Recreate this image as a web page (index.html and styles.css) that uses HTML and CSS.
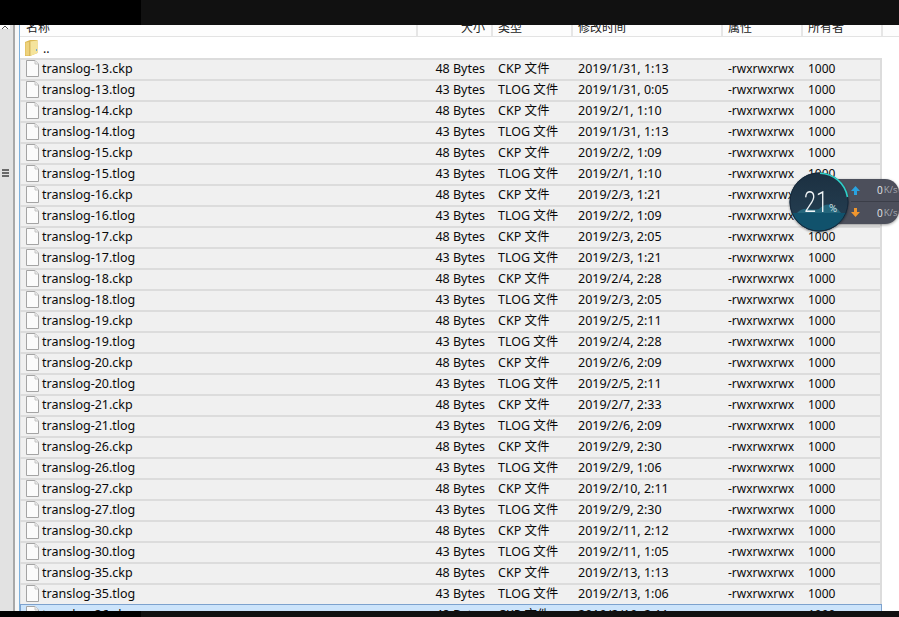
FILE: index.html
```html
<!DOCTYPE html>
<html lang="zh">
<head>
<meta charset="utf-8">
<title>translog</title>
<link rel="stylesheet" href="styles.css">
</head>
<body>
<svg class="defs" width="0" height="0" aria-hidden="true"><defs>
<symbol id="doc" viewBox="0 0 13 17"><path d="M.5.5H9L12.500 4V16.500H.5Z" fill="#fbfbfb" stroke="#a4a4a4"/><path d="M9 .5V4H12.500" fill="#ececec" stroke="#c4c4c4"/></symbol>
</defs></svg>
<div class="app">
  <div class="topbar"><div class="topbar-left"></div></div>
  <div class="main">
    <div class="rail">
      <div class="scroll-up"><svg viewBox="0 0 10 4" width="10" height="4"><path d="M2 4 5 1 8 4" fill="none" stroke="#555"/></svg></div>
      <div class="grip"><i></i><i></i><i></i></div>
    </div>
    <div class="gutter"></div>
    <div class="pane">
      <div class="thead">
        <div class="th c-name">名称</div>
        <div class="th c-size">大小</div>
        <div class="th c-type">类型</div>
        <div class="th c-date">修改时间</div>
        <div class="th c-attr">属性</div>
        <div class="th c-own">所有者</div>
      </div>
      <div class="parent">
        <svg class="folder" viewBox="0 0 13 16" width="13" height="16"><path d="M0 2 5 0H12.500V13L5 16H0Z" fill="#dcb955"/><path d="M.5 2.500V15.500H4.500V2Z" fill="#eed27c"/><path d="M5 1.500 12.500.5V13L5 16Z" fill="#f5e49c"/><path d="M5 1.500V16" stroke="#c9a84e" stroke-width=".7"/><path d="M11 9h1v2h-1z" fill="#6fa8d6"/></svg>
        <span>..</span>
      </div>
      <div class="rows">
<div class="row"><div class="td c-name"><svg class="doc" width="13" height="17"><use href="#doc"/></svg>translog-13.ckp</div><div class="td c-size">48 Bytes</div><div class="td c-type">CKP 文件</div><div class="td c-date">2019/1/31, 1:13</div><div class="td c-attr">-rwxrwxrwx</div><div class="td c-own">1000</div></div>
<div class="row"><div class="td c-name"><svg class="doc" width="13" height="17"><use href="#doc"/></svg>translog-13.tlog</div><div class="td c-size">43 Bytes</div><div class="td c-type">TLOG 文件</div><div class="td c-date">2019/1/31, 0:05</div><div class="td c-attr">-rwxrwxrwx</div><div class="td c-own">1000</div></div>
<div class="row"><div class="td c-name"><svg class="doc" width="13" height="17"><use href="#doc"/></svg>translog-14.ckp</div><div class="td c-size">48 Bytes</div><div class="td c-type">CKP 文件</div><div class="td c-date">2019/2/1, 1:10</div><div class="td c-attr">-rwxrwxrwx</div><div class="td c-own">1000</div></div>
<div class="row"><div class="td c-name"><svg class="doc" width="13" height="17"><use href="#doc"/></svg>translog-14.tlog</div><div class="td c-size">43 Bytes</div><div class="td c-type">TLOG 文件</div><div class="td c-date">2019/1/31, 1:13</div><div class="td c-attr">-rwxrwxrwx</div><div class="td c-own">1000</div></div>
<div class="row"><div class="td c-name"><svg class="doc" width="13" height="17"><use href="#doc"/></svg>translog-15.ckp</div><div class="td c-size">48 Bytes</div><div class="td c-type">CKP 文件</div><div class="td c-date">2019/2/2, 1:09</div><div class="td c-attr">-rwxrwxrwx</div><div class="td c-own">1000</div></div>
<div class="row"><div class="td c-name"><svg class="doc" width="13" height="17"><use href="#doc"/></svg>translog-15.tlog</div><div class="td c-size">43 Bytes</div><div class="td c-type">TLOG 文件</div><div class="td c-date">2019/2/1, 1:10</div><div class="td c-attr">-rwxrwxrwx</div><div class="td c-own">1000</div></div>
<div class="row"><div class="td c-name"><svg class="doc" width="13" height="17"><use href="#doc"/></svg>translog-16.ckp</div><div class="td c-size">48 Bytes</div><div class="td c-type">CKP 文件</div><div class="td c-date">2019/2/3, 1:21</div><div class="td c-attr">-rwxrwxrwx</div><div class="td c-own">1000</div></div>
<div class="row"><div class="td c-name"><svg class="doc" width="13" height="17"><use href="#doc"/></svg>translog-16.tlog</div><div class="td c-size">43 Bytes</div><div class="td c-type">TLOG 文件</div><div class="td c-date">2019/2/2, 1:09</div><div class="td c-attr">-rwxrwxrwx</div><div class="td c-own">1000</div></div>
<div class="row"><div class="td c-name"><svg class="doc" width="13" height="17"><use href="#doc"/></svg>translog-17.ckp</div><div class="td c-size">48 Bytes</div><div class="td c-type">CKP 文件</div><div class="td c-date">2019/2/3, 2:05</div><div class="td c-attr">-rwxrwxrwx</div><div class="td c-own">1000</div></div>
<div class="row"><div class="td c-name"><svg class="doc" width="13" height="17"><use href="#doc"/></svg>translog-17.tlog</div><div class="td c-size">43 Bytes</div><div class="td c-type">TLOG 文件</div><div class="td c-date">2019/2/3, 1:21</div><div class="td c-attr">-rwxrwxrwx</div><div class="td c-own">1000</div></div>
<div class="row"><div class="td c-name"><svg class="doc" width="13" height="17"><use href="#doc"/></svg>translog-18.ckp</div><div class="td c-size">48 Bytes</div><div class="td c-type">CKP 文件</div><div class="td c-date">2019/2/4, 2:28</div><div class="td c-attr">-rwxrwxrwx</div><div class="td c-own">1000</div></div>
<div class="row"><div class="td c-name"><svg class="doc" width="13" height="17"><use href="#doc"/></svg>translog-18.tlog</div><div class="td c-size">43 Bytes</div><div class="td c-type">TLOG 文件</div><div class="td c-date">2019/2/3, 2:05</div><div class="td c-attr">-rwxrwxrwx</div><div class="td c-own">1000</div></div>
<div class="row"><div class="td c-name"><svg class="doc" width="13" height="17"><use href="#doc"/></svg>translog-19.ckp</div><div class="td c-size">48 Bytes</div><div class="td c-type">CKP 文件</div><div class="td c-date">2019/2/5, 2:11</div><div class="td c-attr">-rwxrwxrwx</div><div class="td c-own">1000</div></div>
<div class="row"><div class="td c-name"><svg class="doc" width="13" height="17"><use href="#doc"/></svg>translog-19.tlog</div><div class="td c-size">43 Bytes</div><div class="td c-type">TLOG 文件</div><div class="td c-date">2019/2/4, 2:28</div><div class="td c-attr">-rwxrwxrwx</div><div class="td c-own">1000</div></div>
<div class="row"><div class="td c-name"><svg class="doc" width="13" height="17"><use href="#doc"/></svg>translog-20.ckp</div><div class="td c-size">48 Bytes</div><div class="td c-type">CKP 文件</div><div class="td c-date">2019/2/6, 2:09</div><div class="td c-attr">-rwxrwxrwx</div><div class="td c-own">1000</div></div>
<div class="row"><div class="td c-name"><svg class="doc" width="13" height="17"><use href="#doc"/></svg>translog-20.tlog</div><div class="td c-size">43 Bytes</div><div class="td c-type">TLOG 文件</div><div class="td c-date">2019/2/5, 2:11</div><div class="td c-attr">-rwxrwxrwx</div><div class="td c-own">1000</div></div>
<div class="row"><div class="td c-name"><svg class="doc" width="13" height="17"><use href="#doc"/></svg>translog-21.ckp</div><div class="td c-size">48 Bytes</div><div class="td c-type">CKP 文件</div><div class="td c-date">2019/2/7, 2:33</div><div class="td c-attr">-rwxrwxrwx</div><div class="td c-own">1000</div></div>
<div class="row"><div class="td c-name"><svg class="doc" width="13" height="17"><use href="#doc"/></svg>translog-21.tlog</div><div class="td c-size">43 Bytes</div><div class="td c-type">TLOG 文件</div><div class="td c-date">2019/2/6, 2:09</div><div class="td c-attr">-rwxrwxrwx</div><div class="td c-own">1000</div></div>
<div class="row"><div class="td c-name"><svg class="doc" width="13" height="17"><use href="#doc"/></svg>translog-26.ckp</div><div class="td c-size">48 Bytes</div><div class="td c-type">CKP 文件</div><div class="td c-date">2019/2/9, 2:30</div><div class="td c-attr">-rwxrwxrwx</div><div class="td c-own">1000</div></div>
<div class="row"><div class="td c-name"><svg class="doc" width="13" height="17"><use href="#doc"/></svg>translog-26.tlog</div><div class="td c-size">43 Bytes</div><div class="td c-type">TLOG 文件</div><div class="td c-date">2019/2/9, 1:06</div><div class="td c-attr">-rwxrwxrwx</div><div class="td c-own">1000</div></div>
<div class="row"><div class="td c-name"><svg class="doc" width="13" height="17"><use href="#doc"/></svg>translog-27.ckp</div><div class="td c-size">48 Bytes</div><div class="td c-type">CKP 文件</div><div class="td c-date">2019/2/10, 2:11</div><div class="td c-attr">-rwxrwxrwx</div><div class="td c-own">1000</div></div>
<div class="row"><div class="td c-name"><svg class="doc" width="13" height="17"><use href="#doc"/></svg>translog-27.tlog</div><div class="td c-size">43 Bytes</div><div class="td c-type">TLOG 文件</div><div class="td c-date">2019/2/9, 2:30</div><div class="td c-attr">-rwxrwxrwx</div><div class="td c-own">1000</div></div>
<div class="row"><div class="td c-name"><svg class="doc" width="13" height="17"><use href="#doc"/></svg>translog-30.ckp</div><div class="td c-size">48 Bytes</div><div class="td c-type">CKP 文件</div><div class="td c-date">2019/2/11, 2:12</div><div class="td c-attr">-rwxrwxrwx</div><div class="td c-own">1000</div></div>
<div class="row"><div class="td c-name"><svg class="doc" width="13" height="17"><use href="#doc"/></svg>translog-30.tlog</div><div class="td c-size">43 Bytes</div><div class="td c-type">TLOG 文件</div><div class="td c-date">2019/2/11, 1:05</div><div class="td c-attr">-rwxrwxrwx</div><div class="td c-own">1000</div></div>
<div class="row"><div class="td c-name"><svg class="doc" width="13" height="17"><use href="#doc"/></svg>translog-35.ckp</div><div class="td c-size">48 Bytes</div><div class="td c-type">CKP 文件</div><div class="td c-date">2019/2/13, 1:13</div><div class="td c-attr">-rwxrwxrwx</div><div class="td c-own">1000</div></div>
<div class="row"><div class="td c-name"><svg class="doc" width="13" height="17"><use href="#doc"/></svg>translog-35.tlog</div><div class="td c-size">43 Bytes</div><div class="td c-type">TLOG 文件</div><div class="td c-date">2019/2/13, 1:06</div><div class="td c-attr">-rwxrwxrwx</div><div class="td c-own">1000</div></div>
<div class="row selected"><div class="td c-name"><svg class="doc" width="13" height="17"><use href="#doc"/></svg>translog-36.ckp</div><div class="td c-size">48 Bytes</div><div class="td c-type">CKP 文件</div><div class="td c-date">2019/2/19, 2:11</div><div class="td c-attr">-rwxrwxrwx</div><div class="td c-own">1000</div></div>
      </div>
    </div>
  </div>
  <div class="bottombar"><div class="bottombar-left"></div></div>
</div>
<div class="meter">
  <div class="speeds">
    <div class="speed"><svg viewBox="0 0 9 9" width="9" height="9"><path d="M4.500 0 9 5H6V9H3V5H0Z" fill="#29a3e0"/></svg><b>0</b><em>K/s</em></div>
    <div class="speed"><svg viewBox="0 0 9 9" width="9" height="9"><path d="M4.500 9 9 4H6V0H3V4H0Z" fill="#f0962e"/></svg><b>0</b><em>K/s</em></div>
  </div>
  <div class="dial">
    <svg class="dial-art" viewBox="0 0 60 60" width="60" height="60">
      <defs>
        <clipPath id="disc"><circle cx="30" cy="30" r="29.500"/></clipPath>
        <linearGradient id="sky" x1="0" y1="0" x2="0" y2="1"><stop offset="0" stop-color="#1c3041"/><stop offset=".7" stop-color="#233c4f"/></linearGradient>
      </defs>
      <circle cx="30" cy="30" r="29.500" fill="url(#sky)"/>
      <g clip-path="url(#disc)">
        <path d="M8 41Q13 36 19 37T30 37Q36 31 42 33T52 41Z" fill="#24667c"/>
        <rect x="0" y="41" width="60" height="19" fill="#11526c"/>
      </g>
      <circle cx="30" cy="30" r="29" fill="none" stroke="#16283a" stroke-width="1"/>
      <path d="M31 1.200A28.800 28.800 0 0 1 58.500 25" fill="none" stroke="#2fd0c8" stroke-width="1.600"/>
    </svg>
    <span class="pct"><span class="digits">21</span><small>%</small></span>
  </div>
</div>
</body>
</html>
```
FILE: styles.css
```css
* { box-sizing: border-box; }
html, body { margin: 0; height: 100%; overflow: hidden; background: #fff; }
body { font: 12px/16px "Noto Sans CJK SC", "Liberation Sans", sans-serif; color: #111; }
.defs { position: absolute; }
.app { display: flex; flex-direction: column; height: 617px; }
.topbar { flex: 0 0 25px; background: #111; position: relative; z-index: 2; }
.topbar-left { width: 141px; height: 100%; background: #000; }
.bottombar { flex: 0 0 6px; background: #111; position: relative; z-index: 2; }
.bottombar-left { width: 141px; height: 100%; background: #000; }
.main { flex: 1; display: flex; min-height: 0; }
.rail { width: 13px; flex: none; background: #e2e2e2; }
.scroll-up { width: 10px; height: 4px; background: #fff; display: flex; }
.grip { width: 13px; display: flex; flex-direction: column; gap: 1px; padding: 0 4px 0 2px; margin-top: 140px; }
.grip i { display: block; height: 2px; background: #6a6a6a; }
.gutter { width: 7px; flex: none; background: #f7f7f7; border-left: 2px solid #a8a8a8; border-right: 1px solid #7fb1dc; }
.pane { flex: 1; min-width: 0; overflow: hidden; background: #fff; }
.thead { display: flex; height: 12px; background: #fdfdfd; border-bottom: 1px solid #e3e3e3; overflow: hidden; }
.th { flex: none; height: 11px; border-right: 2px solid #e6e6e6; line-height: 4px; overflow: hidden; white-space: nowrap; color: #222; }
.parent { height: 21px; display: flex; align-items: center; gap: 5px; padding-left: 5px; }
.parent span { line-height: 16px; }
.row { display: flex; align-items: center; width: 862px; height: 21px; background: #f0f0f0; box-shadow: inset 0 2px 0 #dcdcdc, inset -2px 0 0 #dcdcdc, inset 1px 0 0 #e2e2e2; }
.row.selected { background: #cce4fb; box-shadow: inset 0 1px 0 #7da2ce, inset -1px 0 0 #7da2ce, inset 1px 0 0 #7da2ce; }
.td { flex: none; white-space: nowrap; font-family: "Noto Sans", "Noto Sans CJK SC", sans-serif; font-size: 12.500px; color: #0a0a0a; }
.c-name { width: 398px; }
.c-size { width: 75px; text-align: right; }
.c-type { width: 80px; padding-left: 5px; }
.c-date { width: 150px; padding-left: 5px; }
.c-attr { width: 80px; padding-left: 5px; }
.c-own { width: 80px; padding-left: 5px; }
.td.c-name { display: flex; align-items: center; gap: 3px; padding-left: 6px; }
.td.c-size { padding-right: 8px; }
.td.c-attr, .td.c-own { font-size: 12px; }
.th.c-name { padding-left: 6px; }
.th.c-size { padding-right: 6px; }
.doc { flex: none; }
.folder { flex: none; }
.meter { position: absolute; left: 789px; top: 172px; width: 110px; height: 60px; }
.dial { position: absolute; left: 0; top: 0; width: 60px; height: 60px; }
.dial-art { position: absolute; left: 0; top: 0; filter: drop-shadow(0 1px 1px rgba(0,0,0,.4)); }
.pct { position: absolute; left: 15px; top: 13px; display: flex; align-items: baseline; color: #f2f6f8; white-space: nowrap; font-family: "Roboto", sans-serif; font-weight: 300; }
.digits { font-size: 30px; line-height: 34px; display: inline-block; width: 24px; transform: scaleX(.72); transform-origin: left center; }
.pct small { font-size: 11px; margin-left: 1px; }
.speeds { position: absolute; left: 43px; top: 7px; width: 67px; height: 45px; background: #4c4f5b; border-radius: 0 14px 14px 0; box-shadow: 0 1px 3px rgba(0,0,0,.4); display: flex; flex-direction: column; padding-left: 19px; }
.speed { display: flex; align-items: center; height: 22px; font: 9.500px/16px "Open Sans", sans-serif; color: #c9ccd2; }
.speed + .speed { border-top: 1px solid #3b3e48; }
.speed svg { flex: none; margin-right: 17px; }
.speed b { font-weight: 400; margin-right: 1px; color: #e6e8ea; font-size: 10px; }
.speed em { font-style: normal; color: #a6aab2; }
```
